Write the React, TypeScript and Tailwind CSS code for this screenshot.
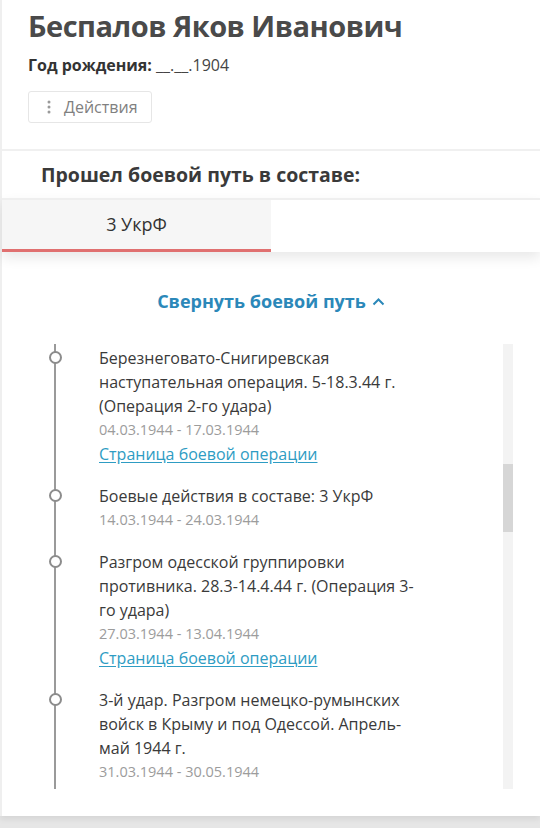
import React from 'react';

type Op = {
  title: string;
  dates: string;
  link?: boolean;
};

// line breaks follow the wrapping in the original layout
const ops: Op[] = [
  {
    title: 'Березнеговато-Снигиревская\nнаступательная операция. 5-18.3.44 г.\n(Операция 2-го удара)',
    dates: '04.03.1944 - 17.03.1944',
    link: true,
  },
  { title: 'Боевые действия в составе: 3 УкрФ', dates: '14.03.1944 - 24.03.1944' },
  {
    title: 'Разгром одесской группировки\nпротивника. 28.3-14.4.44 г. (Операция 3-\nго удара)',
    dates: '27.03.1944 - 13.04.1944',
    link: true,
  },
  {
    title: '3-й удар. Разгром немецко-румынских\nвойск в Крыму и под Одессой. Апрель-\nмай 1944 г.',
    dates: '31.03.1944 - 30.05.1944',
    link: true,
  },
];

function Dots() {
  return (
    <svg width="4" height="14" viewBox="0 0 4 14" className="fill-[#9a9a9a]">
      <circle cx="2" cy="2" r="1.5" />
      <circle cx="2" cy="7" r="1.5" />
      <circle cx="2" cy="12" r="1.5" />
    </svg>
  );
}

function TimelineItem({ op }: { op: Op }) {
  return (
    <div className="relative pb-[18px]">
      <span className="absolute left-[-50px] top-[5px] w-[13px] h-[13px] rounded-full border-2 border-[#8c8c8c] bg-white" />
      <p className="whitespace-pre-line text-[16px] leading-[24px] text-[#3a3a3a]">{op.title}</p>
      <p className="text-[14.5px] leading-[24px] text-[#9c9c9c]">{op.dates}</p>
      {op.link && (
        <a href="#" className="block text-[16px] leading-[24px] text-[#2e9cc3] underline underline-offset-2">
          Страница боевой операции
        </a>
      )}
    </div>
  );
}

export default function App() {
  return (
    <div className="h-[828px] overflow-hidden bg-[#e6e6e6] font-['Open_Sans',_'Noto_Sans',_sans-serif]">
      <div className="bg-white border-l-2 border-[#efefef] shadow-[0_3px_6px_rgba(0,0,0,0.08)]">
        <div className="px-[26px] pt-[7px] pb-[26px] border-b-2 border-[#f0f0f0]">
          <h1 className="text-[29px] leading-[38px] font-bold text-[#4a4a4a] tracking-[-0.5px]">
            Беспалов Яков Иванович
          </h1>
          <p className="mt-[9px] text-[16px] leading-[22px] text-[#444]">
            <span className="font-bold text-[#333]">Год рождения:</span> __.__.1904
          </p>
          <button className="mt-[15px] h-[32px] w-[124px] flex items-center gap-[13px] pl-[18px] border border-[#e6e6e6] rounded-[3px] text-[16px] text-[#808080]">
            <Dots />
            Действия
          </button>
        </div>

        <h2 className="px-[39px] pt-[10px] pb-[9px] text-[19.5px] leading-[28px] font-bold text-[#3a3a3a]">
          Прошел боевой путь в составе:
        </h2>

        <div className="relative z-10 flex border-t-2 border-[#efefef] shadow-[0_6px_12px_rgba(0,0,0,0.09)]">
          <div className="w-1/2 h-[52px] flex items-center justify-center bg-[#f6f6f6] border-b-[3px] border-[#e07070] text-[18px] text-[#333]">
            3 УкрФ
          </div>
          <div className="w-1/2 bg-white" />
        </div>

        <div className="pt-[37px] pb-[27px]">
          <button className="mx-auto flex items-center gap-[6px] text-[18px] leading-[24px] font-bold text-[#2b88b9]">
            Свернуть боевой путь
            <svg width="13" height="9" viewBox="0 0 13 9" fill="none" stroke="#2b88b9" strokeWidth="2">
              <path d="M1.5 7.5 L6.5 2.5 L11.5 7.5" />
            </svg>
          </button>

          <div className="mt-[31px] flex h-[445px] pr-[27px]">
            <div className="relative flex-1 overflow-hidden pl-[97px] pt-[2px]">
              <span className="absolute left-[52px] top-0 bottom-0 w-[2px] bg-[#9a9a9a]" />
              <div className="w-[360px]">
                {ops.map((op) => (
                  <TimelineItem key={op.dates} op={op} />
                ))}
              </div>
            </div>
            <div className="w-[10px] bg-[#f3f3f3] pt-[120px]">
              <div className="h-[68px] bg-[#d6d6d6]" />
            </div>
          </div>
        </div>
      </div>
    </div>
  );
}
